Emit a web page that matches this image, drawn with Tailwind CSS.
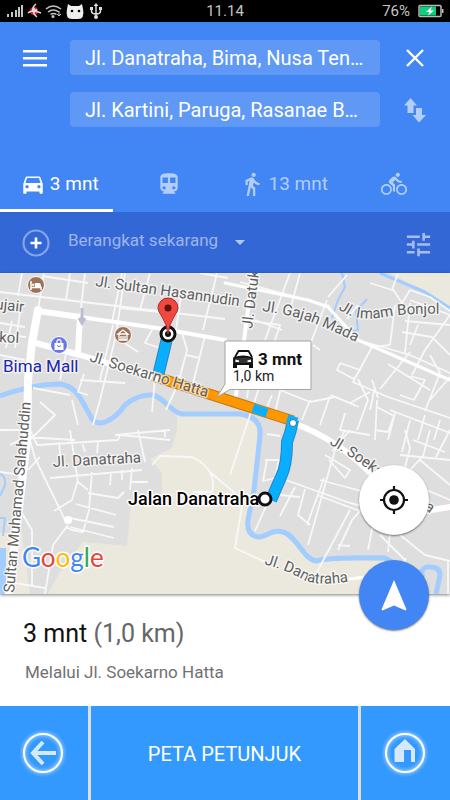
<!DOCTYPE html>
<html lang="id">
<head>
    <meta charset="UTF-8">
    <meta name="viewport" content="width=device-width, initial-scale=1.0">
    <title>Petunjuk arah</title>
    <script src="https://cdn.jsdelivr.net/npm/@tailwindcss/browser@4"></script>
</head>
<body class="min-h-screen flex flex-col bg-white font-[Roboto,sans-serif]">
    <!-- Status bar -->
    <div class="grid grid-cols-3 items-center h-[22px] px-[6px] bg-black text-[#c4c4c4] text-[15px] leading-[22px]">
        <svg class="w-24 h-[22px]" viewBox="0 0 96 22" fill="#c4c4c4" aria-hidden="true">
            <path d="M1 14h2v3H1zM5 12h2v5H5zM9 10h2v7H9zM12 7h2v10h-2zM15 5h2v12h-2z"/>
            <circle cx="28" cy="11" r="4" fill="#e02020"/>
            <path d="M30 4q-4 3-3 7t4 6M22 13q4-4 13 0M26 10h5M28 8v5" fill="none" stroke="#ddd" stroke-width="1.5"/>
            <path d="M40 9q7-6 15 0M42 12q5-4 11 0M44.500 14.500q3-2 6 0" fill="none" stroke="#c4c4c4" stroke-width="1.500"/>
            <circle cx="47" cy="16.500" r="1.500"/>
            <path d="M53 11v5M51 14l2 2 2-2" fill="none" stroke="#c4c4c4"/>
            <path d="M62 4l3 2h8l3-2 1 5q2 10-5 10h-6q-7 0-5-10z" fill="#eee"/>
            <circle cx="66" cy="11" r="1.300" fill="#000"/><circle cx="73" cy="11" r="1.300" fill="#000"/>
            <path d="M90 5v12M85.500 8v3q0 3 4.500 3t4.500-3V8" fill="none" stroke="#ddd" stroke-width="1.500"/>
            <path d="M87.500 6L90 3l2.500 3zM84 7h3v3h-3zM93 7h3v3h-3z" fill="#ddd"/><circle cx="90" cy="17" r="2" fill="#ddd"/>
        </svg>
        <span class="text-center">11.14</span>
        <span class="flex items-center justify-end gap-2">76%
            <svg class="w-[26px] h-[14px]" viewBox="0 0 26 14" aria-hidden="true">
                <rect x="1" y="1.500" width="22" height="11" rx="1" fill="none" stroke="#bbb" stroke-width="1.500"/>
                <path d="M2 2.500h16v9H2z" fill="#0fce7f"/>
                <path d="M24 5h1.500v4H24z" fill="#bbb"/>
                <path d="M14 2.500L8 8h3.500L10 11.500 16 6.500h-3.500z" fill="#fff"/>
            </svg>
        </span>
    </div>

    <header class="bg-[#4285f4] text-white">
        <form class="grid grid-cols-[70px_1fr_70px] gap-y-[17px] pt-[18px] items-center">
            <button type="button" aria-label="Menu" class="justify-self-center">
                <svg class="w-6 h-6" viewBox="0 0 24 24" fill="#fff"><path d="M0 4h24v2.500H0zM0 11h24v2.500H0zM0 18h24v2.500H0z"/></svg>
            </button>
            <input type="text" aria-label="Asal" value="Jl. Danatraha, Bima, Nusa Ten…"
                class="w-full h-[35px] px-[15px] pt-px rounded bg-[#6098f6] text-[20px]">
            <button type="button" aria-label="Tutup" class="justify-self-center">
                <svg class="w-6 h-6" viewBox="0 0 24 24" fill="none" stroke="#fff" stroke-width="2.400"><path d="M4 4l16 16M20 4L4 20"/></svg>
            </button>
            <input type="text" aria-label="Tujuan" value="Jl. Kartini, Paruga, Rasanae B…"
                class="col-start-2 w-full h-[35px] px-[15px] pt-px rounded bg-[#6098f6] text-[20px]">
            <button type="button" aria-label="Tukar" class="justify-self-center">
                <svg class="w-6 h-7" viewBox="0 0 24 28" fill="#b3cefb"><path d="M7.500 2L14 9.500h-3.500V17H4.500V9.500H1zM13 12h6v7h4l-7 7.500L9.500 19H13z"/></svg>
            </button>
        </form>

        <nav class="grid grid-cols-4 h-14 mt-[29px] text-[19px] text-[#b3cefb]">
            <a href="#" class="flex items-center justify-center gap-1 pl-[6px] pt-[3px] border-b-3 border-white text-white">
                <svg class="w-[26px] h-[26px]" viewBox="0 0 24 24" fill="currentColor"><path d="M18.920 6.010C18.720 5.420 18.160 5 17.500 5h-11c-.66 0-1.210.42-1.420 1.010L3 12v8c0 .55.45 1 1 1h1c.55 0 1-.45 1-1v-1h12v1c0 .55.45 1 1 1h1c.55 0 1-.45 1-1v-8l-2.080-5.990zM6.500 16c-.83 0-1.500-.67-1.500-1.500S5.670 13 6.500 13s1.500.67 1.500 1.500S7.330 16 6.500 16zm11 0c-.83 0-1.500-.67-1.500-1.500s.67-1.500 1.500-1.500 1.500.67 1.500 1.500-.67 1.500-1.500 1.500zM5 11l1.500-4.500h11L19 11H5z"/></svg>
                3 mnt
            </a>
            <a href="#" aria-label="Transportasi umum" class="flex items-center justify-center">
                <svg class="w-[26px] h-[26px]" viewBox="0 0 24 24" fill="currentColor"><path d="M12 2c-4.420 0-8 .5-8 4v9.500C4 17.430 5.570 19 7.500 19L6 20.500v.5h12v-.5L16.500 19c1.930 0 3.500-1.570 3.500-3.500V6c0-3.500-3.580-4-8-4zM7.500 17c-.83 0-1.500-.67-1.500-1.500S6.670 14 7.500 14s1.500.67 1.500 1.500S8.330 17 7.500 17zm3.500-6H6V6h5v5zm5.500 6c-.83 0-1.500-.67-1.500-1.500s.67-1.500 1.500-1.500 1.500.67 1.500 1.500-.67 1.500-1.500 1.500zm1.500-6h-5V6h5v5z"/></svg>
            </a>
            <a href="#" class="flex items-center justify-center gap-1 pl-1">
                <svg class="w-[26px] h-[26px]" viewBox="0 0 24 24" fill="currentColor"><path d="M13.500 5.500c1.100 0 2-.9 2-2s-.9-2-2-2-2 .9-2 2 .9 2 2 2zM9.800 8.900L7 23h2.100l1.800-8 2.100 2v6h2v-7.500l-2.100-2 .6-3C14.800 12 16.800 13 19 13v-2c-1.900 0-3.500-1-4.300-2.400l-1-1.600c-.4-.6-1-1-1.700-1-.3 0-.5.1-.8.1L6 8.300V13h2V9.600l1.800-.7"/></svg>
                13 mnt
            </a>
            <a href="#" aria-label="Sepeda" class="flex items-center justify-center">
                <svg class="w-[26px] h-[26px]" viewBox="0 0 24 24" fill="currentColor"><path d="M15.500 5.500c1.100 0 2-.9 2-2s-.9-2-2-2-2 .9-2 2 .9 2 2 2zM5 12c-2.800 0-5 2.200-5 5s2.200 5 5 5 5-2.200 5-5-2.200-5-5-5zm0 8.500c-1.900 0-3.500-1.600-3.500-3.500s1.600-3.500 3.500-3.500 3.500 1.600 3.500 3.500-1.600 3.500-3.500 3.500zm5.800-10l2.400-2.400.8.8c1.300 1.300 3 2.100 5.100 2.100V9c-1.500 0-2.700-.6-3.600-1.500l-1.900-1.900c-.5-.4-1-.6-1.600-.6s-1.100.2-1.400.6L7.800 8.400c-.4.4-.6.9-.6 1.400 0 .6.2 1.100.6 1.400L11 14v5h2v-6.200l-2.200-2.300zM19 12c-2.800 0-5 2.200-5 5s2.200 5 5 5 5-2.200 5-5-2.200-5-5-5zm0 8.500c-1.900 0-3.500-1.600-3.500-3.500s1.600-3.500 3.500-3.500 3.500 1.600 3.500 3.500-1.600 3.500-3.500 3.500z"/></svg>
            </a>
        </nav>

        <div class="flex items-center h-[61px] pl-[22px] pr-4 bg-[#3367d6] text-[#9bb5eb]">
            <button type="button" aria-label="Tambah">
                <svg class="w-7 h-7" viewBox="0 0 28 28" fill="none"><circle cx="14" cy="14" r="12.500" stroke="#85a4e6" stroke-width="2.200"/><path d="M14 8.500v11M8.500 14h11" stroke="#fff" stroke-width="2.600"/></svg>
            </button>
            <select aria-label="Waktu berangkat" class="appearance-none ml-[18px] pb-1 text-[17px]">
                <option>Berangkat sekarang</option>
            </select>
            <svg class="w-[10px] h-[5px] ml-4" viewBox="0 0 10 5" fill="#b5c8f1" aria-hidden="true"><path d="M0 0h10L5 5z"/></svg>
            <button type="button" aria-label="Opsi" class="ml-auto pt-1">
                <svg class="w-[31px] h-[31px]" viewBox="0 0 24 24" fill="#a6bdee"><path d="M3 17v2h6v-2H3zM3 5v2h10V5H3zm10 16v-2h8v-2h-8v-2h-2v6h2zM7 9v2H3v2h4v2h2V9H7zm14 4v-2H11v2h10zm-6-4h2V7h4V5h-4V3h-2v6z"/></svg>
            </button>
        </div>
    </header>

    <!-- Map -->
    <main class="relative grow h-[321px] flex shadow-[0_1px_3px_rgba(0,0,0,0.5)]">
        <svg class="w-full h-full" viewBox="0 273 450 321" preserveAspectRatio="xMidYMid slice" role="img" aria-label="Peta rute">
            <defs>
                <path id="gajah" d="M262 311Q292 315 311 322T372 350"/>
                <path id="imam" d="M338 309L348 315Q364 321 386 317T450 314"/>
                <path id="danatraha" d="M264 564Q288 571 302 579T352 581"/>
                <path id="soekarno" d="M329 444Q350 456 372 472T440 520"/>
            </defs>
            <path d="M0 273h450v321H0z" fill="#dedede"/>

            <!-- Open land -->
            <g fill="#ebe8dd">
                <path d="M177 415H245L258 425 253 500 248 530 258 538 280 531 313 561H385L412 575 418 594H48L58 575 83 542 127 546 131 505 162 496V473L150 459 172 448 177 430z"/>
                <path d="M390 273L450 307V273z"/>
                <path d="M0 533H22L30 594H0z"/>
            </g>

            <!-- Water -->
            <g fill="none" stroke="#a3ccff" stroke-width="5" stroke-linejoin="round">
                <path d="M0 396Q30 385 57 384Q73 384 82 401L92 419Q97 425 105 422Q116 418 125 405Q138 394 153 395C165 398 170 412 182 414H240Q262 417 260 436L254 490 248 520Q246 535 258 537C268 537 270 529 283 532S304 560 316 561Q330 557 385 558L415 575"/>
                <path d="M380 273L425 292 450 308" stroke-width="3"/>
                <path d="M342 273L345 287 338 300 332 318M367 299L356 311 358 330 348 332" stroke-width="2"/>
                <path d="M436 594L440 575Q440 567 430 567Q421 566 422 575V594" stroke-width="5"/>
                <path d="M0 474Q6 476 5 485L0 496M0 518H5L3 536" stroke-width="2"/>
            </g>
            <path d="M0 548H6V594H0z" fill="#a3ccff"/>

            <!-- Side streets -->
            <g fill="none" stroke="#f8f8f8" stroke-width="1.800" stroke-linejoin="round">
                <path d="M22 273L18 296M0 292L75 301 225 319M44 273L38 310M70 273L66 300M85 273L80 317M42 276L88 283M122 273L112 322M150 273L140 310M182 290L176 330M217 273L203 330M200 273L228 278M240 282L330 306M0 323L25 327M0 334L26 337M20 312L15 348M12 321L6 348"/>
                <path d="M125 273L116 335 100 400 93 425M113 325L100 380M120 308L180 314M182 333L187 350 178 384 166 410M186 355L200 358M205 336L190 395M153 328L145 343 160 348M120 340L138 352M155 378L152 412M0 355L25 360M66 354L60 380M33 388L70 395M40 402L55 415 30 440M72 400L78 425M80 380L125 383M84 374L78 392 88 395"/>
                <path d="M245 320L280 325 230 475M300 273L290 310M290 273L265 340M327 300L310 345M255 345L247 398M272 395L265 412M285 370L275 413M313 345L320 350M310 400L302 420M255 320L282 330M280 390L310 402 335 397 355 405"/>
                <path d="M328 297L347 275M347 319L358 305M370 283L392 290 398 273M392 288L402 303 410 290 430 297 450 311M395 305L390 345 374 347M410 300L450 315M410 303L405 353M418 325L410 345M405 321L450 325M402 332L432 337 450 355M450 315L425 350 412 375"/>
                <path d="M358 340L410 355 450 373M372 347L353 382 388 397 450 418M358 379L368 400 357 430M380 389L410 352M340 363L360 370 354 379 337 370 340 363M388 364L430 390M372 380L378 398M410 376L425 380 414 400 400 395M430 355L440 373 425 411M450 377L430 400M390 410L450 433M375 387L370 410M377 400L375 440M377 407L394 416 388 432 375 430M395 413L388 440M410 420L402 452M425 415L418 440M440 420L434 440"/>
                <path d="M330 396L320 425M345 413L340 430 370 435M331 395L359 407M345 430L335 450 308 545M350 430L332 451M267 434L280 436M265 460H279L275 478 263 481 267 460M255 531L270 497M280 478L300 485 350 503 400 515M295 487L280 516M305 489L298 515 310 525M324 478L307 525M320 480L365 492M317 495L365 513M325 455L350 470 345 478 329 460M280 495L300 497M370 500L352 520 338 550M350 510L317 572M338 545L350 546M375 515L368 550M380 535L405 560M391 525L388 552M400 535L425 555 450 561M406 558L399 574"/>
                <path d="M405 430L410 448 403 475M413 440L445 452M400 455L450 460M430 430L423 456 410 470M420 460L450 485M415 485L450 500M350 403L370 392M448 560V594M436 457L450 430"/>
                <path d="M0 430H30L37 445 118 440 120 435 170 440M10 445L25 437 75 440M59 442L61 465M70 430L78 482 88 490M82 442L85 452M98 442L97 453M115 435L170 430M138 430L145 462M27 430L35 458 65 520M40 457L28 470M50 478L142 470M92 472L89 510 83 532 72 530 66 527M88 493L118 498 124 492M78 480L72 500 54 511M76 504L116 515M70 518L114 527M70 527L114 538M111 472L110 485M122 470L122 480M132 468L130 490M130 482H148M165 430V437M68 525L53 545 45 594M0 472L22 475M20 510L32 530V585M15 583L45 588M152 465L160 456 192 457Q218 470 212 492H193M210 472L243 500 235 548 265 562"/>
            </g>
            <circle cx="68" cy="520" r="4" fill="#fff"/>

            <!-- Main streets -->
            <g fill="none" stroke="#fff" stroke-linejoin="round" stroke-linecap="round">
                <path d="M38 310L32 343 28 380 27 440 8 600" stroke-width="8"/>
                <path d="M38 311L80 317 78 353M32 342L80 355 157 378 293 423Q340 440 375 478T425 511L450 507" stroke-width="6"/>
                <path d="M253 268L245 333 236 395M80 317L157 328 225 340" stroke-width="4"/>
                <path d="M225 283L308 300 328 307 358 340 450 380M350 579L380 575" stroke-width="3"/>
            </g>
            <path d="M82 308V324M79 318L82 323 85 318" fill="none" stroke="#b8bfd0" stroke-width="3"/>

            <!-- Route -->
            <g fill="none" stroke-linejoin="round">
                <path d="M168 334L158 376M293 420Q291 432 287 442Q287 465 281 477L271 500" stroke="#2b83c4" stroke-width="12"/>
                <path d="M153 376L293 421" stroke="#c47a14" stroke-width="11"/>
                <path d="M168 334L158 376M293 420Q291 432 287 442Q287 465 281 477L271 500" stroke="#0aaeff" stroke-width="10"/>
                <path d="M153 376L293 421" stroke="#ff9800" stroke-width="9"/>
                <path d="M253 408L267 413M287 419L297 422" stroke="#0aaeff" stroke-width="9"/>
            </g>
            <circle cx="157" cy="379" r="3.500" fill="#fff" stroke="#888"/>
            <circle cx="293" cy="423" r="3.500" fill="#fff" stroke="#1f78b4"/>

            <!-- Street names -->
            <g font-size="15" fill="#5f5f5f" stroke="#fff" stroke-opacity="0.6" stroke-width="3" stroke-linejoin="round" paint-order="stroke">
                <text transform="translate(95 286) rotate(8)">Jl. Sultan Hasannudin</text>
                <text transform="translate(252 329) rotate(-83)">Jl. Datuk</text>
                <text><textPath href="#gajah">Jl. Gajah Mada</textPath></text>
                <text><textPath href="#imam">Jl. Imam Bonjol</textPath></text>
                <text transform="translate(-5 309) rotate(6)">ujair</text>
                <text transform="translate(-1 342) rotate(3)">kol</text>
                <text transform="translate(89 361) rotate(17)">Jl. Soekarno Hatta</text>
                <text transform="translate(53 467) rotate(-3)">Jl. Danatraha</text>
                <text transform="translate(14 593) rotate(-85)">Sultan Muhamad Salahuddin</text>
                <text><textPath href="#soekarno">Jl. Soekarno Hatta</textPath></text>
                <text><textPath href="#danatraha">Jl. Danatraha</textPath></text>
                <text x="3" y="372" font-size="17" fill="#1c26b0">Bima Mall</text>
                <text x="128" y="505" font-size="18" font-weight="500" fill="#000" stroke-opacity="1">Jalan Danatraha</text>
            </g>

            <!-- Places -->
            <g stroke="#fff" stroke-width="1">
                <circle cx="36" cy="285" r="8.500" fill="#9c7259"/>
                <circle cx="123" cy="335" r="8.500" fill="#9c7259"/>
                <circle cx="59" cy="345" r="8.500" fill="#6a78e0"/>
            </g>
            <path d="M31 281V290M31 287.500H41V290" fill="none" stroke="#fff" stroke-width="1.500"/>
            <path d="M35 283H39Q41 283 41 287H35z" fill="#fff"/>
            <circle cx="33.300" cy="284.800" r="1.200" fill="#fff"/>
            <path d="M118 334L123 330 128 334zM119 334H127V340H119zM121 336V340M123 336V340M125 336V340" fill="none" stroke="#fff" stroke-width="1.300"/>
            <path d="M54.500 343H63.500V350H54.500z" fill="#fff"/>
            <path d="M57 343V341Q59 338 61 341V343" fill="none" stroke="#fff" stroke-width="1.300"/>
            <path d="M57 345.500Q59 348 61 345.500" fill="none" stroke="#6a78e0"/>

            <!-- Start and end -->
            <circle cx="265" cy="499" r="6" fill="#fff" stroke="#111" stroke-width="3"/>
            <circle cx="168" cy="334" r="7" fill="#fff" stroke="#111" stroke-width="3"/>
            <circle cx="168" cy="334" r="3" fill="#111"/>
            <path d="M168 334Q167 324 161 315Q158 311 158 308A10 10 0 0 1 178 308Q178 311 175 315Q169 324 168 334z" fill="#f0473f" stroke="#a62b25"/>
            <circle cx="168" cy="308" r="3.500" fill="#5a1510"/>

            <!-- Route bubble -->
            <path d="M225 341H311V389.500H230L217 397 225 384z" fill="#fff" stroke="#a5a5a5"/>
            <g fill="none" stroke="#111" stroke-width="1.800" stroke-linejoin="round">
                <path d="M235 357L238.500 351H248.500L252 357"/>
                <path d="M234 358Q243 355 252 358V364H234z" fill="#333"/>
            </g>
            <path d="M233 364H237V368H233zM249 364H253V368H249z" fill="#111"/>
            <path d="M235.500 359.500L239 360.500V362H235.500zM251 359.500L247.500 360.500V362H251z" fill="#fff"/>
            <text x="258" y="365" font-size="17" font-weight="700" fill="#111">3 mnt</text>
            <text x="233" y="381" font-size="14" fill="#222">1,0 km</text>

            <text x="22" y="567" font-family="Lato, sans-serif" font-size="26" stroke="#fff" stroke-width="3" stroke-linejoin="round" paint-order="stroke"><tspan fill="#4285f4">G</tspan><tspan fill="#ea4335">o</tspan><tspan fill="#fbbc05">o</tspan><tspan fill="#4285f4">g</tspan><tspan fill="#34a853">l</tspan><tspan fill="#ea4335">e</tspan></text>
        </svg>

        <button type="button" aria-label="Lokasi saya" class="absolute right-[21px] bottom-[59px] flex items-center justify-center w-[70px] h-[70px] rounded-full bg-white shadow-[0_1px_2px_rgba(0,0,0,0.5)]">
            <svg class="w-7 h-7" viewBox="0 0 28 28" fill="none" stroke="#111" stroke-width="2.200"><circle cx="14" cy="14" r="10"/><circle cx="14" cy="14" r="4.800" fill="#111" stroke="none"/><path d="M14 0v5M14 23v5M0 14h5M23 14h5"/></svg>
        </button>
        <button type="button" aria-label="Mulai navigasi" class="absolute right-[21px] -bottom-9 flex items-center justify-center w-[70px] h-[70px] rounded-full bg-[#4285f4] shadow-[0_1px_2px_rgba(0,0,0,0.5)]">
            <svg class="w-[26px] h-8" viewBox="0 0 26 32" fill="#fff"><path d="M13 1L25.500 30.500 24.500 31.500 13 26.500 1.500 31.500.5 30.500z"/></svg>
        </button>
    </main>

    <section class="h-28 px-[23px] pt-6">
        <h1 class="text-[25px] leading-8 text-[#111]">3 mnt <span class="text-[#666]">(1,0 km)</span></h1>
        <p class="pl-[2px] mt-3 text-[17px] leading-5 text-[#717171]">Melalui Jl. Soekarno Hatta</p>
    </section>

    <footer class="grid grid-cols-[88px_1fr_89px] gap-[3px] h-[94px] bg-[#dedede] text-white">
        <button type="button" aria-label="Kembali" class="flex items-center justify-center bg-[#3399ff]">
            <svg class="w-12 h-12" viewBox="0 0 48 48" fill="none"><circle class="drop-shadow-[0_0_2px_#ffffff]" cx="23" cy="24" r="19" stroke="#fff" stroke-width="2"/><path d="M36 24H13M23 13L13 24 23 35" stroke="#d6e8fc" stroke-width="4"/></svg>
        </button>
        <button type="button" class="bg-[#3399ff] pt-[2px] text-[20px]">PETA PETUNJUK</button>
        <button type="button" aria-label="Beranda" class="flex items-center justify-center bg-[#3399ff]">
            <svg class="w-12 h-12" viewBox="0 0 48 48" fill="none"><circle class="drop-shadow-[0_0_2px_#ffffff]" cx="23" cy="24" r="19" stroke="#fff" stroke-width="2"/><path d="M12.500 20L23 10l10 10v13h-4V21h-7v12h-9.500z" fill="#d6e8fc"/></svg>
        </button>
    </footer>
</body>
</html>
